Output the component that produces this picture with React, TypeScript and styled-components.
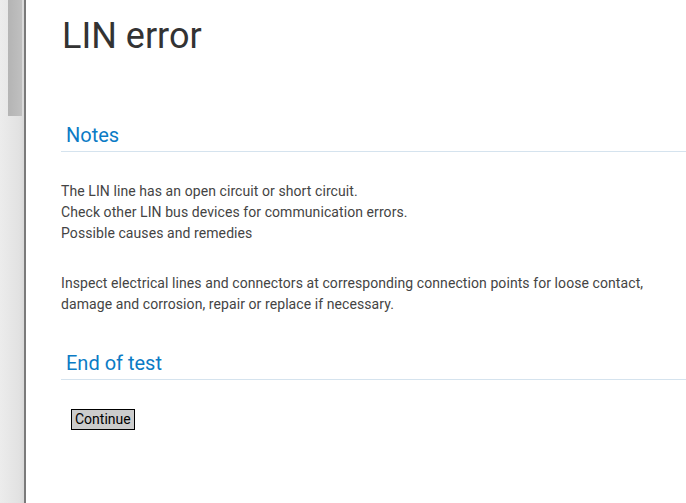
import React from "react";
import styled, { createGlobalStyle } from "styled-components";

const Global = createGlobalStyle`
  html, body { margin: 0; padding: 0; background: #fff; overflow: hidden; }
  body { font-family: Roboto, "Liberation Sans", sans-serif; }
`;

const Page = styled.div`
  display: flex;
  width: 686px;
  height: 503px;
  overflow: hidden;
`;

const Rail = styled.div`
  position: relative;
  width: 24px;
  flex: none;
  background: linear-gradient(to right, #ececec, #e2e2e2 80%, #d8d8d8);
  border-right: 2px solid #7a7a7a;
`;

const Thumb = styled.div`
  position: absolute;
  left: 8px;
  top: 0;
  width: 14px;
  height: 116px;
  background: linear-gradient(to right, #b4b4b4, #c0c0c0);
`;

const Main = styled.main`
  flex: 1;
  padding: 15px 0 0 35px;
  min-width: 0;
`;

const Title = styled.h1`
  margin: 0 0 0 1px;
  font-size: 36px;
  font-weight: 400;
  color: #333;
  line-height: 42px;
`;

const Section = styled.section<{ $top: number }>`
  margin-top: ${(p) => p.$top}px;
`;

const SectionHead = styled.h2`
  margin: 0;
  padding: 3px 0 4px 5px;
  font-size: 20px;
  font-weight: 400;
  color: #0b7bc5;
  line-height: 24px;
  border-bottom: 1px solid #d5e3ee;
`;

const Para = styled.p`
  margin: 0;
  font-size: 14px;
  line-height: 21px;
  letter-spacing: 0.08px;
  color: #444;
`;

const Body = styled.div`
  padding: 29px 0 0 0;
  display: flex;
  flex-direction: column;
  gap: 29px;
`;

const Button = styled.button`
  margin: 29px 0 0 10px;
  font-family: Roboto, "Liberation Sans", sans-serif;
  font-size: 14px;
  padding: 1px 3px;
  background: #cccccc;
  border: 1px solid #000;
  color: #000;
  border-radius: 0;
  line-height: 17px;
`;

export default function App() {
  return (
    <>
      <Global />
      <Page>
        <Rail>
          <Thumb />
        </Rail>
        <Main>
          <Title>LIN error</Title>
          <Section $top={63}>
            <SectionHead>Notes</SectionHead>
            <Body>
              <Para>
                The LIN line has an open circuit or short circuit.
                <br />
                Check other LIN bus devices for communication errors.
                <br />
                Possible causes and remedies
              </Para>
              <Para>
                Inspect electrical lines and connectors at corresponding connection points for loose contact,
                <br />
                damage and corrosion, repair or replace if necessary.
              </Para>
            </Body>
          </Section>
          <Section $top={33}>
            <SectionHead>End of test</SectionHead>
            <Button>Continue</Button>
          </Section>
        </Main>
      </Page>
    </>
  );
}
